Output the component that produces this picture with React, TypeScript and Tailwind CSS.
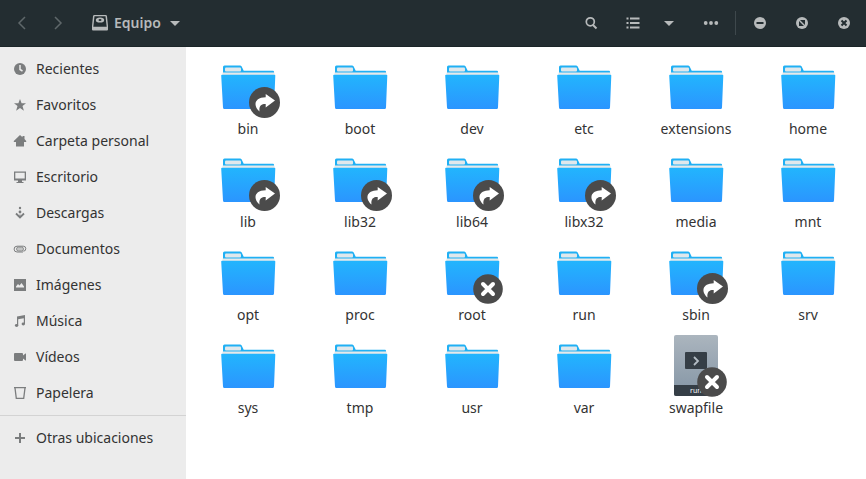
import type { ReactNode } from "react";

const places: { label: string; icon: ReactNode }[] = [
    {
        label: "Recientes",
        icon: (
            <>
                <circle cx="8" cy="8" r="6" />
                <path d="M8 4V8.5L10.5 10" fill="none" stroke="#ececec" strokeWidth="1.5" />
            </>
        ),
    },
    { label: "Favoritos", icon: <path d="M8 2l1.6 4.3H14l-3.5 2.8 1.4 4.6L8 11l-3.9 2.7 1.4-4.6L2 6.3h4.4z" /> },
    { label: "Carpeta personal", icon: <path d="M8 2l2.5 2.3V3h2v3.1L14.2 8v1H12v4.5H4V9H1.8V8z" /> },
    {
        label: "Escritorio",
        icon: <path fillRule="evenodd" d="M2 2.5h12v9H10v1.5h1.5v1h-7v-1H6v-1.5H2zM3.3 3.8v5.7h9.4V3.8z" />,
    },
    {
        label: "Descargas",
        icon: (
            <>
                <circle cx="8" cy="3" r="1.2" />
                <circle cx="8" cy="7" r="1.4" />
                <path d="M4 8.5l4 4 4-4" fill="none" stroke="currentColor" strokeWidth="1.8" />
                <path d="M8 9.5v3" stroke="currentColor" />
            </>
        ),
    },
    {
        label: "Documentos",
        icon: (
            <>
                <rect x="4.5" y="6" width="7" height="4" rx="2" fillOpacity="0.35" stroke="currentColor" strokeWidth="0.8" />
                <path d="M11 11H5a2.9 2.9 0 0 1 0-5.800h6.300a2.500 2.500 0 0 1 0 5" fill="none" stroke="currentColor" />
            </>
        ),
    },
    {
        label: "Imágenes",
        icon: (
            <>
                <path d="M2 2h12v12H2z" />
                <path d="M4 10.5v-1L6 7l1.5 1.5 2-2.5 2.5 3.5v1z" fill="#ececec" />
            </>
        ),
    },
    {
        label: "Música",
        icon: (
            <>
                <path d="M5 3.5l8-1.5v9h-1.2V5.2L6.2 6.200v6.300H5z" />
                <ellipse cx="4.6" cy="12.5" rx="1.7" ry="1.4" />
                <ellipse cx="11.3" cy="11" rx="1.7" ry="1.4" />
            </>
        ),
    },
    {
        label: "Vídeos",
        icon: <path d="M3 4h7a1 1 0 0 1 1 1v1.5l2.5-2h.5v7h-.5l-2.5-2V11a1 1 0 0 1-1 1H3a1 1 0 0 1-1-1V5a1 1 0 0 1 1-1z" />,
    },
    { label: "Papelera", icon: <path d="M2 2.6h12M3 3l1.3 10.4h7.4L13 3" fill="none" stroke="currentColor" strokeWidth="1.3" /> },
];

type Badge = "link" | "locked";

const files: { name: string; badge?: Badge; script?: boolean }[] = [
    { name: "bin", badge: "link" },
    { name: "boot" },
    { name: "dev" },
    { name: "etc" },
    { name: "extensions" },
    { name: "home" },
    { name: "lib", badge: "link" },
    { name: "lib32", badge: "link" },
    { name: "lib64", badge: "link" },
    { name: "libx32", badge: "link" },
    { name: "media" },
    { name: "mnt" },
    { name: "opt" },
    { name: "proc" },
    { name: "root", badge: "locked" },
    { name: "run" },
    { name: "sbin", badge: "link" },
    { name: "srv" },
    { name: "sys" },
    { name: "tmp" },
    { name: "usr" },
    { name: "var" },
    { name: "swapfile", badge: "locked", script: true },
];

const Icon = ({ children }: { children: ReactNode }) => (
    <svg viewBox="0 0 16 16" className="size-4 shrink-0" fill="currentColor" aria-hidden="true">
        {children}
    </svg>
);

const ToolButton = ({ label, className, children }: { label: string; className: string; children: ReactNode }) => (
    <button type="button" aria-label={label} className={`flex h-8 shrink-0 items-center justify-center ${className}`}>
        <Icon>{children}</Icon>
    </button>
);

const FolderIcon = () => (
    <svg viewBox="0 0 64 64" className="size-16" aria-hidden="true">
        <defs>
            <linearGradient id="folder" x1="0" y1="0" x2="0" y2="1">
                <stop offset="0" stopColor="#22b5fd" />
                <stop offset="1" stopColor="#2b95ff" />
            </linearGradient>
        </defs>
        <path d="M7 20v-7a1.5 1.5 0 0 1 1.5-1.5H24a2 2 0 0 1 1.7 1l2 4.200H57a1 1 0 0 1 1 1V20z" fill="#20b0f4" />
        <rect x="9" y="13.5" width="16" height="4" rx="1" fill="#e0e8ec" />
        <path d="M6.500 18.500h52V22h-52z" fill="#e6e9ea" />
        <path
            d="M6 20.7h52.5a.8.8 0 0 1 .8.8L58 53.500a1.5 1.5 0 0 1-1.5 1.500h-48A1.5 1.5 0 0 1 7 53.500L5.2 21.500a.8.8 0 0 1 .8-.8z"
            fill="url(#folder)"
        />
    </svg>
);

const ScriptIcon = () => (
    <svg viewBox="0 0 64 64" className="size-16" aria-hidden="true">
        <defs>
            <linearGradient id="script" x1="0" y1="0" x2="0" y2="1">
                <stop offset="0" stopColor="#abb5be" />
                <stop offset="1" stopColor="#8495a5" />
            </linearGradient>
        </defs>
        <rect x="10" y="2" width="44" height="61" rx="2" fill="url(#script)" />
        <path d="M10 52h44v9a2 2 0 0 1-2 2H12a2 2 0 0 1-2-2z" fill="#353e46" />
        <rect x="21" y="19" width="22" height="17" rx="1" fill="#353e46" />
        <path d="M30 24l4 4-4 4" fill="none" stroke="#b4bdc5" strokeWidth="1.8" />
        <text x="26" y="60" fontSize="7" fontFamily="Noto Sans, sans-serif" fill="#fff">run</text>
    </svg>
);

const Emblem = ({ kind }: { kind: Badge }) => (
    <svg viewBox="0 0 32 32" className="absolute right-0 bottom-0 size-8" aria-hidden="true">
        {kind === "link" ? (
            <>
                <circle cx="16.5" cy="16.5" r="15.5" fill="#4b4b4b" />
                <path d="M17.7 8L27 14.5l-9.300 7V18c-4-.2-7 1.5-6.200 7.500C5 20 6 11.500 17.700 11.300z" fill="#fff" />
            </>
        ) : (
            <>
                <circle cx="16" cy="17" r="14.8" fill="#4b4b4b" />
                <path d="M11 12l10 10m0-10L11 22" stroke="#fff" strokeWidth="4" strokeLinecap="round" />
            </>
        )}
    </svg>
);

export default function App() {
    return (
        <div className="flex min-h-screen flex-col bg-white font-['Noto_Sans',sans-serif] text-sm text-[#333]">
            <header className="flex h-[47px] items-center border-b border-[#1b2528] bg-[#232d31] text-[#b7babb]">
                <ToolButton label="Atrás" className="ml-1 w-9 text-[#5f676a]">
                    <path d="M11 2L5 8l6 6" fill="none" stroke="currentColor" strokeWidth="1.5" />
                </ToolButton>
                <ToolButton label="Adelante" className="w-9 text-[#5f676a]">
                    <path d="M5 2l6 6-6 6" fill="none" stroke="currentColor" strokeWidth="1.5" />
                </ToolButton>
                <button type="button" className="ml-4 flex h-8 items-center gap-1.5 font-semibold">
                    <Icon>
                        <path
                            fillRule="evenodd"
                            d="M2.5 0h11A1.5 1.5 0 0 1 15 1.3L16 11v3.5a1 1 0 0 1-1 1H1a1 1 0 0 1-1-1V11L1 1.3A1.5 1.5 0 0 1 2.5 0zM2.500 1.2L1.3 11.8h13.4L13.5 1.2z"
                        />
                        <ellipse cx="8" cy="5" rx="4.2" ry="2.6" />
                        <ellipse cx="8" cy="5" rx="1.5" ry="1" fill="#232d31" />
                    </Icon>
                    Equipo
                    <Icon><path d="M3 6h10l-5 5z" /></Icon>
                </button>
                <div className="flex-1" />
                <ToolButton label="Buscar" className="w-10">
                    <circle cx="7.3" cy="6.8" r="4" fill="none" stroke="currentColor" strokeWidth="1.7" />
                    <path d="M10 10l3.5 3.5" stroke="currentColor" strokeWidth="2" />
                </ToolButton>
                <ToolButton label="Vista de lista" className="w-11">
                    <path d="M1.5 2.5h2v2h-2zM1.5 7h2v2h-2zM1.5 11.5h2v2h-2zM5 2.5h9.5v2H5zM5 7h9.5v2H5zM5 11.5h9.5v2H5z" />
                </ToolButton>
                <ToolButton label="Opciones de vista" className="w-7">
                    <path d="M3 6h10l-5 5z" />
                </ToolButton>
                <ToolButton label="Menú" className="ml-2 w-10">
                    <circle cx="2.7" cy="8" r="1.9" />
                    <circle cx="8" cy="8" r="1.9" />
                    <circle cx="13.3" cy="8" r="1.9" />
                </ToolButton>
                <div className="mx-1 h-6 w-px bg-[#3e484c]" />
                <ToolButton label="Minimizar" className="w-10">
                    <circle cx="8" cy="8" r="6" />
                    <path d="M4.5 8h7" stroke="#232d31" strokeWidth="2" />
                </ToolButton>
                <ToolButton label="Maximizar" className="w-11">
                    <circle cx="8" cy="8" r="6" />
                    <path d="M6 5h5v5zM5 6v5h5z" fill="#232d31" />
                </ToolButton>
                <ToolButton label="Cerrar" className="mr-0.5 w-10">
                    <circle cx="8" cy="8" r="6" />
                    <path d="M5.5 5.5l5 5m0-5l-5 5" stroke="#232d31" strokeWidth="2" />
                </ToolButton>
            </header>

            <div className="flex flex-1">
                <nav className="w-[186px] shrink-0 bg-[#ececec] pt-1">
                    {places.map((place) => (
                        <a key={place.label} href="#" className="flex h-9 items-center gap-2 px-3">
                            <span className="text-[#7b7d7e]"><Icon>{place.icon}</Icon></span>
                            {place.label}
                        </a>
                    ))}
                    <hr className="my-1 border-[#d3d3d3]" />
                    <a href="#" className="flex h-9 items-center gap-2 px-3">
                        <span className="text-[#7b7d7e]">
                            <Icon><path d="M7 3h2v4h4v2H9v4H7V9H3V7h4z" /></Icon>
                        </span>
                        Otras ubicaciones
                    </a>
                </nav>

                <main className="grid flex-1 grid-cols-[repeat(auto-fill,112px)] content-start gap-y-2 pt-[7px] pl-1.5">
                    {files.map((file) => (
                        <button key={file.name} type="button" className="flex flex-col items-center">
                            <span className="relative">
                                {file.script ? <ScriptIcon /> : <FolderIcon />}
                                {file.badge && <Emblem kind={file.badge} />}
                            </span>
                            <span className="leading-[21px]">{file.name}</span>
                        </button>
                    ))}
                </main>
            </div>
        </div>
    );
}
